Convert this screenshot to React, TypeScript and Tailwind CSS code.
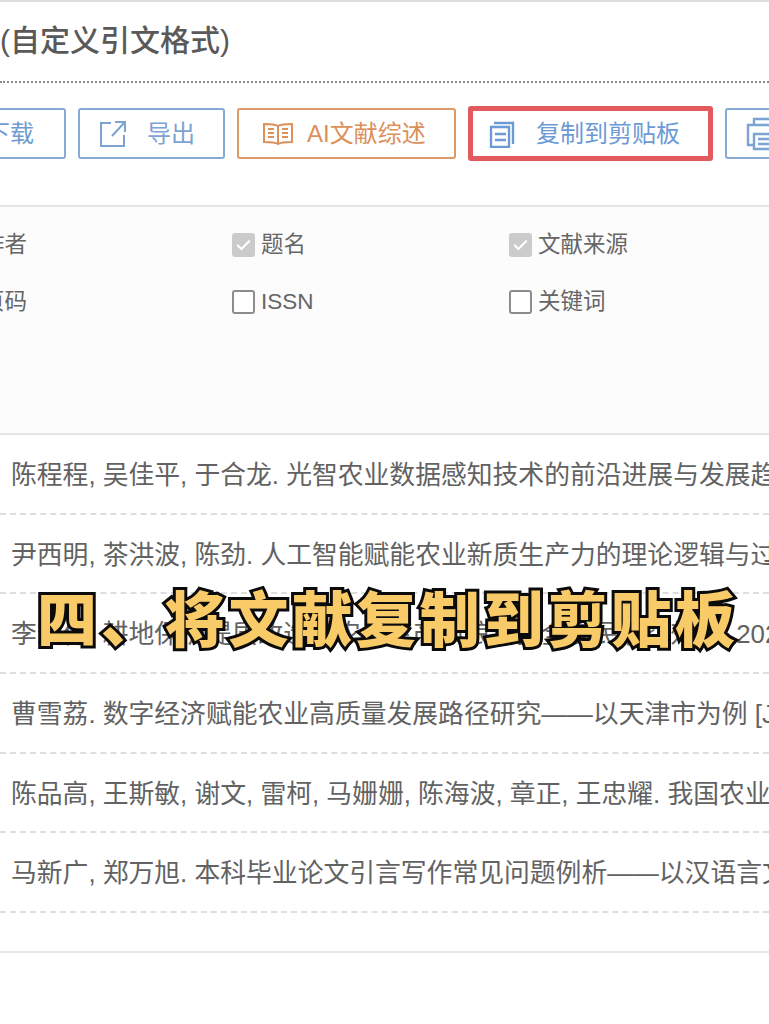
import { Check } from 'lucide-react'

const FONT = 'font-["Liberation_Sans","Noto_Sans_CJK_SC",sans-serif]'

const REFERENCES = [
  '陈程程, 吴佳平, 于合龙. 光智农业数据感知技术的前沿进展与发展趋势 [J]. 智慧农业, 2025',
  '尹西明, 茶洪波, 陈劲. 人工智能赋能农业新质生产力的理论逻辑与过程机制 [J]. 2025',
  '李宏伟, 耕地保护提质改造对农业生产和粮食安全农民收益效果, 2025',
  '曹雪荔. 数字经济赋能农业高质量发展路径研究——以天津市为例 [J]. 2025',
  '陈品高, 王斯敏, 谢文, 雷柯, 马姗姗, 陈海波, 章正, 王忠耀. 我国农业发展研究 [J]. 2025',
  '马新广, 郑万旭. 本科毕业论文引言写作常见问题例析——以汉语言文学专业为例 [J]. 2025',
]

function ExportIcon() {
  return (
    <svg viewBox="0 0 28 28" className="h-7 w-7 shrink-0" fill="none" stroke="currentColor" strokeWidth="2">
      <path d="M12 3H2v23h23V15" />
      <path d="M13 16 25 3M16 2h10v10" />
    </svg>
  )
}

function BookIcon() {
  return (
    <svg viewBox="0 0 30 24" className="h-6 w-[30px] shrink-0" fill="none" stroke="currentColor" strokeWidth="2">
      <path d="M15 4C12 2 6 2 1 2v18c5 0 11 0 14 2 3-2 9-2 14-2V2c-5 0-11 0-14 2ZM15 4v18" />
      <path d="M5 7h6M5 11h6M5 15h6M19 7h6M19 11h6M19 15h6" />
    </svg>
  )
}

function ClipboardIcon() {
  return (
    <svg viewBox="0 0 28 28" className="h-7 w-7 shrink-0" fill="none" stroke="currentColor" strokeWidth="2.4">
      <path d="M6 3h19v21M3 27V7h18v20H3Z" />
      <path d="M7 14h11M7 20h11" />
    </svg>
  )
}

function PrinterIcon() {
  return (
    <svg viewBox="0 0 34 34" className="h-[34px] w-[34px] shrink-0" fill="none" stroke="currentColor" strokeWidth="2.4">
      <path d="M9 8V2h22M9 28H3V8h30v20" />
      <path d="M9 17h26v15H9zM13 22h16M13 27h16" />
    </svg>
  )
}

function CheckItem({ label, checked = false, className = '' }: { label: string; checked?: boolean; className?: string }) {
  return (
    <div className={`flex shrink-0 items-center gap-[6px] ${className}`}>
      {checked ? (
        <span className="flex h-[24px] w-[23px] items-center justify-center rounded-[3px] bg-[#cbcbcb] text-white">
          <Check size={17} strokeWidth={3} />
        </span>
      ) : (
        <span className="h-[24px] w-[23px] rounded-[3px] border-2 border-[#8d8d8d] bg-white" />
      )}
      <span>{label}</span>
    </div>
  )
}

export default function App() {
  return (
    <div className={`${FONT} relative h-[1024px] w-[769px] overflow-hidden bg-white text-[#5e5e5e]`}>
      <div className="h-[2px] bg-[#dedede]" />

      <div className="flex h-[79px] items-center whitespace-nowrap pb-[2px] text-[30px] font-medium text-[#595959]">
        (自定义引文格式)
      </div>
      <div className="border-t-2 border-dotted border-[#8a8a8a]" />

      <div className="ml-[-80px] mt-[25px] flex h-[51px] items-center gap-[12px] whitespace-nowrap text-[24px] text-[#6f9bd1]">
        <div className="flex h-[51px] w-[146px] shrink-0 items-center justify-end rounded-[3px] border-2 border-[#86aad3] pr-[30px]">
          下载
        </div>
        <div className="flex h-[51px] w-[147px] shrink-0 items-center gap-[20px] rounded-[3px] border-2 border-[#86aad3] pl-[19px] text-[#7ba3d3]">
          <ExportIcon />
          导出
        </div>
        <div className="flex h-[51px] w-[219px] shrink-0 items-center gap-[14px] rounded-[3px] border-2 border-[#dd9a68] pl-[24px] text-[#dc905a]">
          <BookIcon />
          AI文献综述
        </div>
        <div className="flex h-[55px] w-[245px] shrink-0 items-center gap-[20px] rounded-[3px] border-[5px] border-[#e25a5d] pl-[15px] text-[#6c9ad6]">
          <ClipboardIcon />
          复制到剪贴板
        </div>
        <div className="flex h-[51px] w-[120px] shrink-0 items-center rounded-[3px] border-2 border-[#86aad3] pl-[18px] text-[#7ba3d3]">
          <PrinterIcon />
        </div>
      </div>

      <div className="mt-[46px] h-[230px] border-y-2 border-[#e6e6e6] bg-[#fcfcfc] text-[22.5px] text-[#666666]">
        <div className="ml-[-20px] mt-[26px] flex h-[24px] items-center whitespace-nowrap">
          <span className="w-[252px] shrink-0 pl-[2px]">作者</span>
          <CheckItem label="题名" checked className="w-[277px]" />
          <CheckItem label="文献来源" checked />
        </div>
        <div className="ml-[-20px] mt-[33px] flex h-[24px] items-center whitespace-nowrap">
          <span className="w-[252px] shrink-0 pl-[2px]">页码</span>
          <CheckItem label="ISSN" className="w-[277px]" />
          <CheckItem label="关键词" />
        </div>
      </div>

      <div className="whitespace-nowrap text-[25.8px] text-[#626262]">
        {REFERENCES.map((text) => (
          <div key={text} className="flex h-[79.7px] items-start border-b-2 border-dashed border-[#dedede] pl-[11px] pt-[24px] leading-[32px]">
            {text}
          </div>
        ))}
      </div>

      <div className="mt-[38px] border-t-2 border-[#e6e6e6]" />

      <div className="absolute left-[37px] top-[580px] whitespace-nowrap text-[60px] leading-[84px] font-black tracking-[3.8px] text-[#f9cb68] [-webkit-text-stroke:6px_#0b0b0b] [paint-order:stroke_fill] [text-shadow:2px_2px_0_#0b0b0b]">
        四、将文献复制到剪贴板
      </div>
    </div>
  )
}
